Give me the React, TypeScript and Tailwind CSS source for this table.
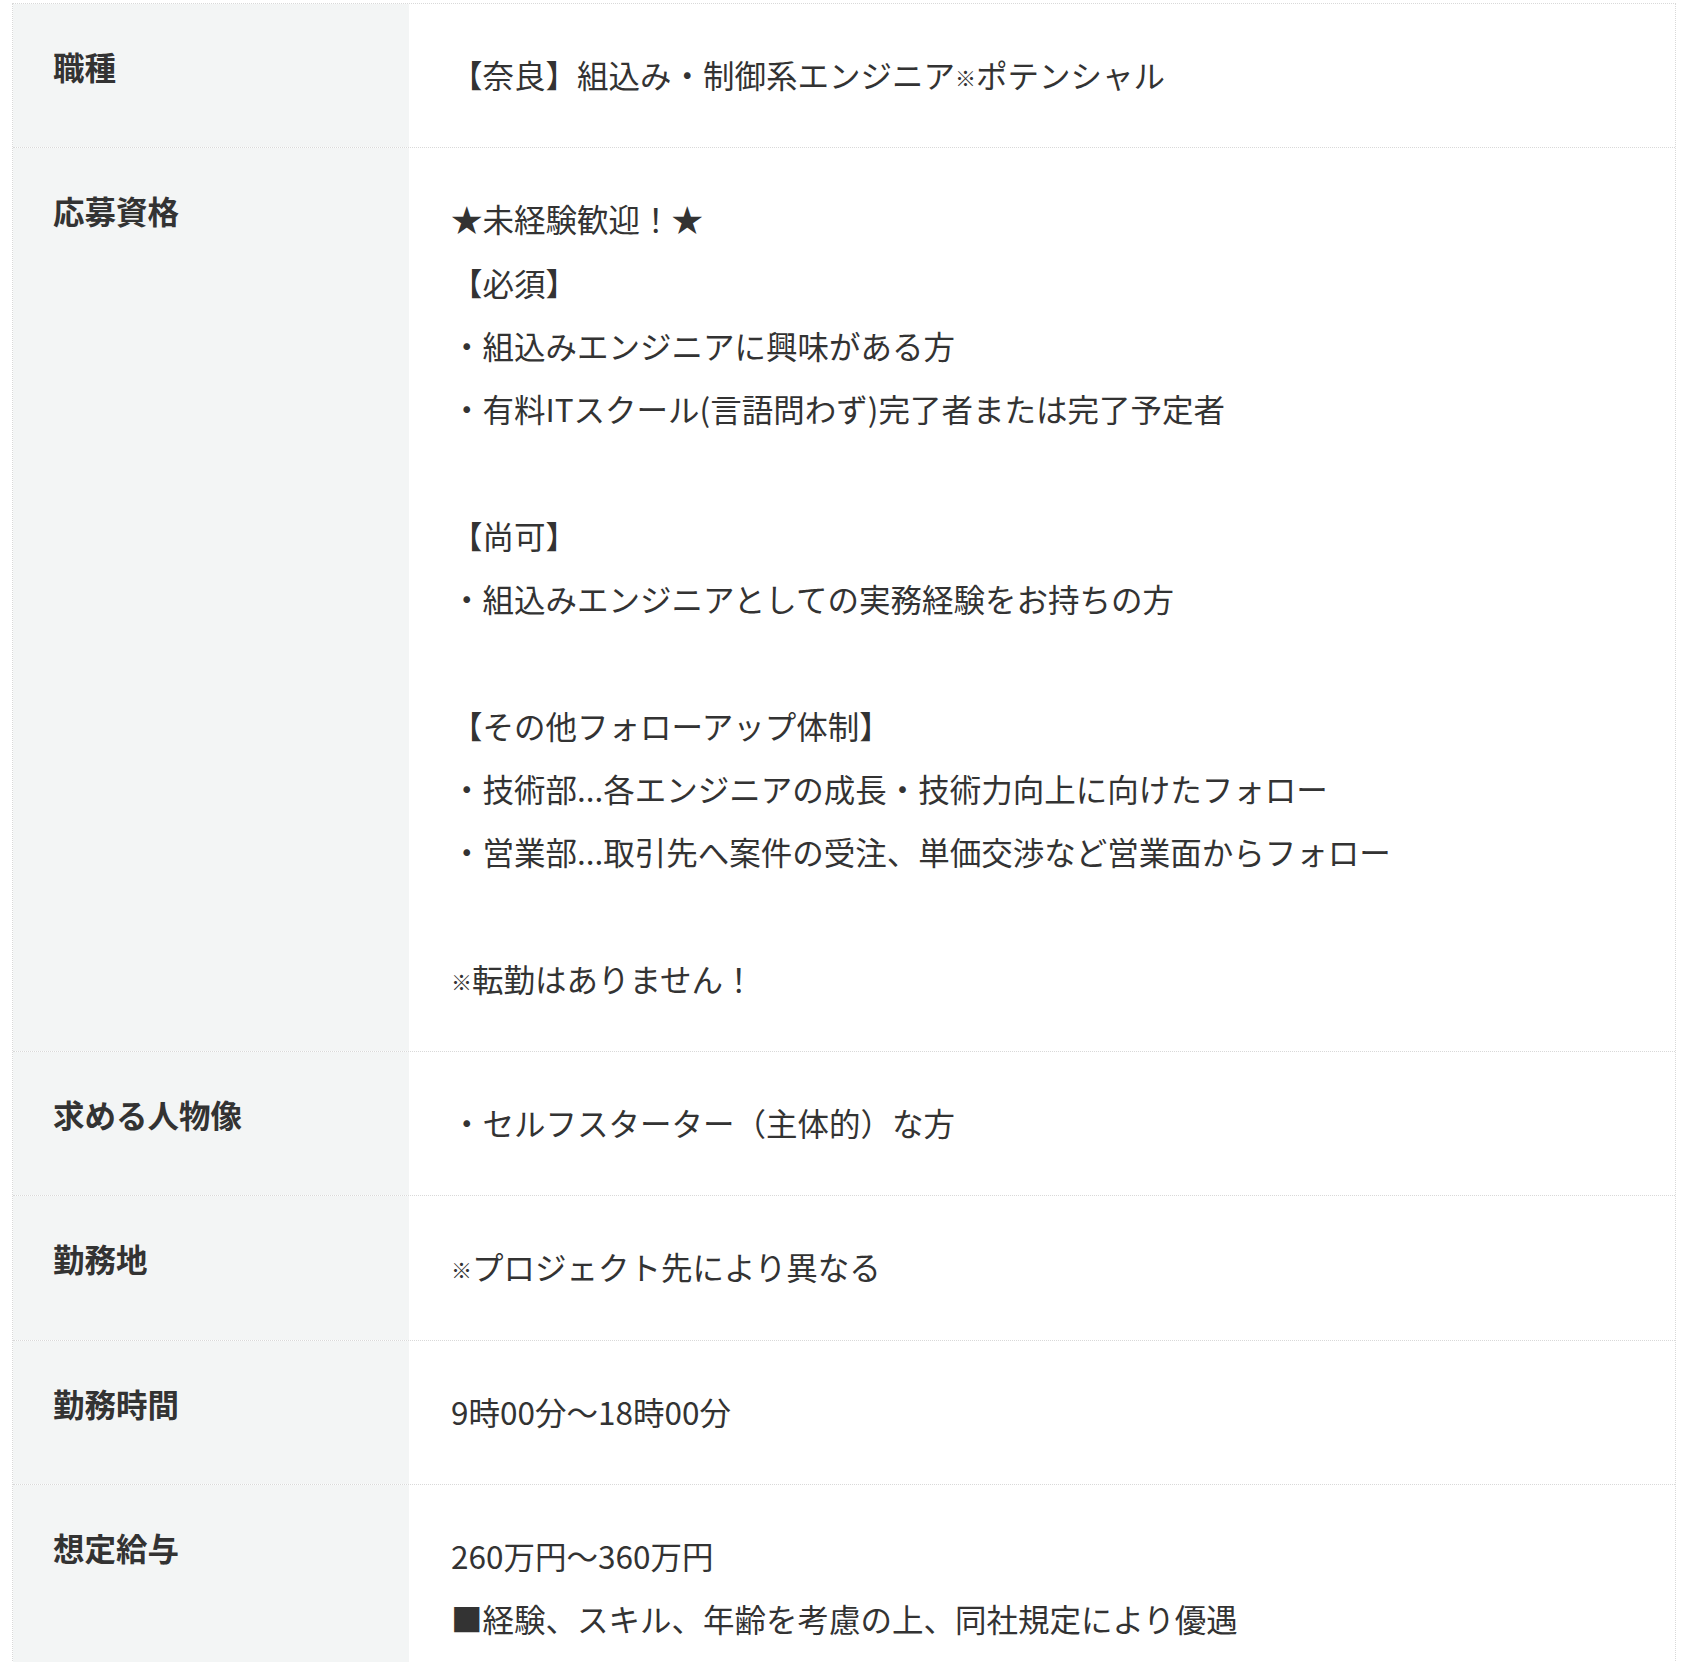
const rows: { label: string; lines: string[] }[] = [
  { label: "職種", lines: ["【奈良】組込み・制御系エンジニア※ポテンシャル"] },
  {
    label: "応募資格",
    lines: [
      "★未経験歓迎！★",
      "【必須】",
      "・組込みエンジニアに興味がある方",
      "・有料ITスクール(言語問わず)完了者または完了予定者",
      "",
      "【尚可】",
      "・組込みエンジニアとしての実務経験をお持ちの方",
      "",
      "【その他フォローアップ体制】",
      "・技術部...各エンジニアの成長・技術力向上に向けたフォロー",
      "・営業部...取引先へ案件の受注、単価交渉など営業面からフォロー",
      "",
      "※転勤はありません！",
    ],
  },
  { label: "求める人物像", lines: ["・セルフスターター（主体的）な方"] },
  { label: "勤務地", lines: ["※プロジェクト先により異なる"] },
  { label: "勤務時間", lines: ["9時00分〜18時00分"] },
  {
    label: "想定給与",
    lines: ["260万円〜360万円", "■経験、スキル、年齢を考慮の上、同社規定により優遇"],
  },
];

// ※ is drawn small in the original font
function Line({ text }: { text: string }) {
  const parts = text.split("※");
  return (
    <>
      {parts.map((part, i) => (
        <span key={i}>
          {i > 0 && <span className="align-[2px] text-[21px] font-medium">※</span>}
          {part}
        </span>
      ))}
    </>
  );
}

export default function App() {
  return (
    <main
      className="min-h-screen bg-white px-[12px] pt-[3px] text-[#333]"
      style={{ fontFamily: '"Noto Sans CJK JP", "Noto Sans", sans-serif' }}
    >
      <div className="border border-dotted border-[#d9d9d9]">
        {rows.map((row, i) => (
          <div
            key={row.label}
            className={
              "grid grid-cols-[396px_1fr] " +
              (i > 0 ? "border-t border-dotted border-[#d9d9d9]" : "")
            }
          >
            <div className="bg-[#f3f5f5] px-[40px] pt-[38px] pb-[41px] text-[31.5px] font-bold leading-[48px]">
              {row.label}
            </div>
            <div className="px-[42px] pt-[39px] pb-[41px] text-[31.5px] leading-[63.3px]">
              {row.lines.map((line, j) => (
                <div key={j} className="h-[63.3px] whitespace-pre">
                  <Line text={line} />
                </div>
              ))}
            </div>
          </div>
        ))}
      </div>
    </main>
  );
}
